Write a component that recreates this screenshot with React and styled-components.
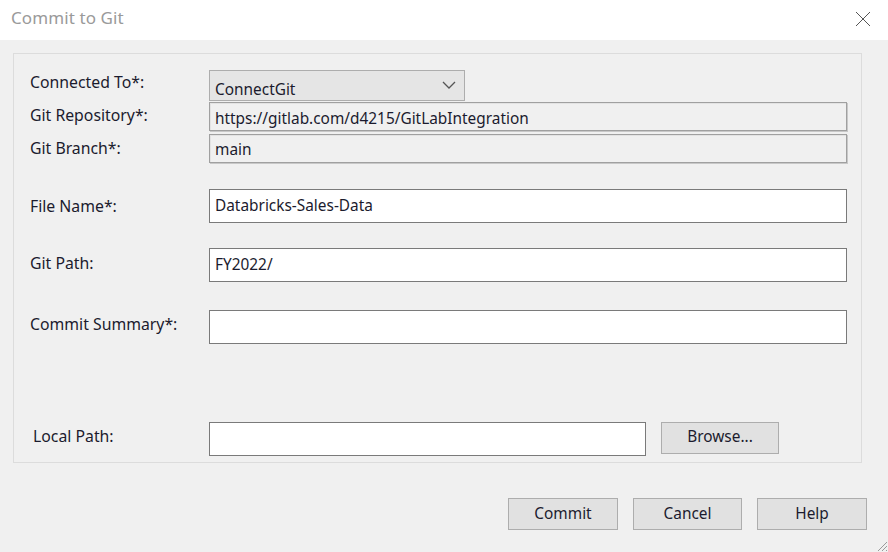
import React from 'react'
import styled, { createGlobalStyle } from 'styled-components'

const Global = createGlobalStyle`
  html, body { margin: 0; padding: 0; background: #f0f0f0; }
  * { box-sizing: border-box; }
`

const Window = styled.div`
  width: 888px;
  height: 552px;
  background: #f0f0f0;
  display: flex;
  flex-direction: column;
  position: relative;
  font-family: "Noto Sans", "Open Sans", sans-serif;
  font-size: 15.4px;
  color: #1b1b2e;
  overflow: hidden;
`

const TitleBar = styled.div`
  height: 40px;
  background: #fff;
  display: flex;
  align-items: center;
  justify-content: space-between;
  padding: 0 0 6px 11px;
`

const Title = styled.div`
  color: #9a9a9a;
  font-size: 17px;
  letter-spacing: 0.1px;
`

const Close = styled.button`
  width: 44px;
  height: 34px;
  border: 0;
  background: transparent;
  display: flex;
  align-items: center;
  justify-content: center;
  padding: 0;
  margin: 4px 3px 0 0;
`

const Body = styled.div`
  flex: 1;
  display: flex;
  flex-direction: column;
  padding: 13px 27px 0 13px;
`

const Panel = styled.div`
  width: 849px;
  height: 410px;
  border: 1px solid #dcdcdc;
  padding: 16px 14px 0 16px;
  display: flex;
  flex-direction: column;
`

const Row = styled.div`
  display: grid;
  grid-template-columns: 179px 1fr;
  align-items: center;
  margin-top: ${p => p.$gap || 0}px;
`

const Label = styled.div`
  padding-bottom: ${p => p.$lift ?? 4}px;
  padding-left: ${p => p.$indent || 0}px;
  white-space: nowrap;
  font-size: 15.8px;
`

const Select = styled.div`
  width: 256px;
  height: 31px;
  background: #e5e5e5;
  border: 1px solid #adadad;
  display: flex;
  align-items: flex-end;
  justify-content: space-between;
  padding: 0 8px 0 5px;
`

const ReadOnly = styled.div`
  height: 29px;
  background: #f0f0f0;
  border: 1px solid #a0a0a0;
  box-shadow: inset 1px 1px 0 #e3e3e3, 1px 1px 0 #c8c8c8;
  display: flex;
  align-items: center;
  padding: ${p => p.$drop || 0}px 5px 0;
`

const Input = styled.div`
  height: 34px;
  width: ${p => (p.$w ? `${p.$w}px` : 'auto')};
  background: #fff;
  border: 1px solid #7a7a7a;
  display: flex;
  align-items: center;
  padding: 0 5px 2px;
`

const InputLine = styled.div`
  display: flex;
  align-items: center;
  gap: 15px;
`

const Button = styled.button`
  width: ${p => p.$w || 110}px;
  height: 32px;
  background: #e1e1e1;
  border: 1px solid #adadad;
  font-family: inherit;
  font-size: 15.4px;
  color: #1b1b2e;
  padding: 0 0 2px;
  margin-top: ${p => p.$mt || 0}px;
`

const Footer = styled.div`
  display: flex;
  justify-content: flex-end;
  gap: 15px;
  margin-top: 35px;
  margin-right: -6px;
`

const Grip = styled.svg`
  position: absolute;
  right: 0;
  bottom: 0;
`

const Chevron = () => (
  <svg width="14" height="8" viewBox="0 0 14 8" style={{ marginBottom: 11 }}>
    <path d="M1 1 L7 7 L13 1" fill="none" stroke="#555" strokeWidth="1.3" />
  </svg>
)

export default function App() {
  return (
    <Window>
      <Global />
      <TitleBar>
        <Title>Commit to Git</Title>
        <Close aria-label="Close">
          <svg width="16" height="16" viewBox="0 0 16 16">
            <path d="M1 1 L15 15 M15 1 L1 15" stroke="#555" strokeWidth="1" />
          </svg>
        </Close>
      </TitleBar>
      <Body>
        <Panel>
          <Row>
            <Label $lift={8}>Connected To*:</Label>
            <Select>
              <span>ConnectGit</span>
              <Chevron />
            </Select>
          </Row>
          <Row $gap={1}>
            <Label>Git Repository*:</Label>
            <ReadOnly $drop={3}>https://gitlab.com/d4215/GitLabIntegration</ReadOnly>
          </Row>
          <Row $gap={3}>
            <Label $lift={2}>Git Branch*:</Label>
            <ReadOnly $drop={1}>main</ReadOnly>
          </Row>
          <Row $gap={26}>
            <Label $lift={0}>File Name*:</Label>
            <Input>Databricks-Sales-Data</Input>
          </Row>
          <Row $gap={25}>
            <Label>Git Path:</Label>
            <Input>FY2022/</Input>
          </Row>
          <Row $gap={28}>
            <Label $lift={6}>Commit Summary*:</Label>
            <Input />
          </Row>
          <Row $gap={78}>
            <Label $indent={3} $lift={6}>Local Path:</Label>
            <InputLine>
              <Input $w={437} />
              <Button $w={118} $mt={-3}>Browse...</Button>
            </InputLine>
          </Row>
        </Panel>
        <Footer>
          <Button>Commit</Button>
          <Button $w={109}>Cancel</Button>
          <Button>Help</Button>
        </Footer>
      </Body>
      <Grip width="14" height="14" viewBox="0 0 14 14">
        <path d="M13 4 L4 13 M13 8 L8 13 M13 12 L12 13" stroke="#9a9a9a" strokeWidth="1" />
      </Grip>
    </Window>
  )
}
